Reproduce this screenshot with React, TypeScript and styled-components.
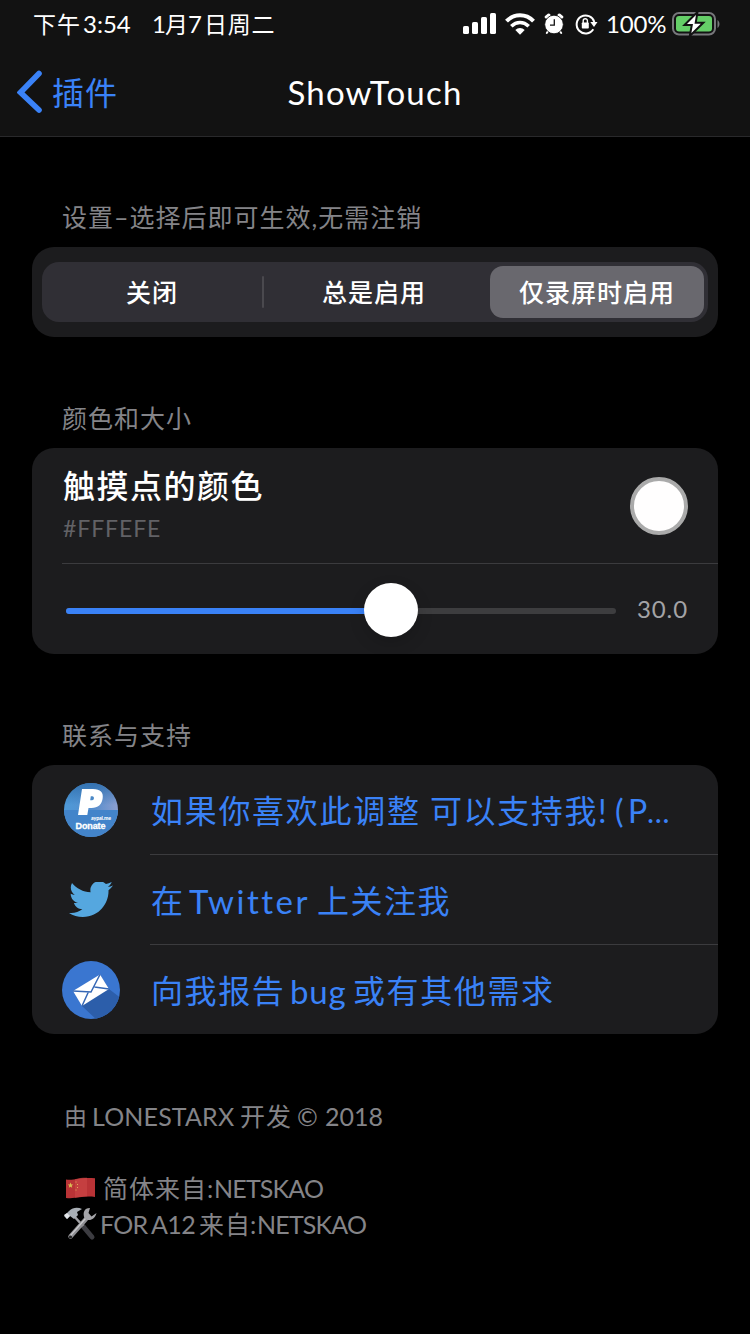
import React from 'react';
import styled, { createGlobalStyle } from 'styled-components';

const GlobalStyle = createGlobalStyle`
  * { box-sizing: border-box; }
  body {
    margin: 0;
    background: #000;
    color: #fff;
    font-family: Lato, 'Noto Sans CJK SC', sans-serif;
  }
`;

const Screen = styled.main`
  width: 750px;
  height: 1334px;
  overflow: hidden;
  background: #000;
`;

const Header = styled.header`
  height: 137px;
  background: #121212;
  border-bottom: 1px solid #29292b;
`;

const StatusBar = styled.div`
  display: flex;
  align-items: center;
  justify-content: space-between;
  height: 48px;
  padding: 0 30px 0 33px;
`;

const Line = styled.div<{ $size: number; $color?: string }>`
  display: flex;
  align-items: center;
  height: 36px;
  line-height: 36px;
  font-size: ${p => p.$size}px;
  color: ${p => p.$color ?? 'inherit'};
  white-space: pre;
`;

const Run = styled.span<{ $w: number; $track?: number; $size?: number }>`
  flex: none;
  width: ${p => p.$w}px;
  letter-spacing: ${p => p.$track ?? 0}px;
  ${p => p.$size && `font-size: ${p.$size}px;`}
`;

const StatusIcons = styled.div`
  display: flex;
  align-items: center;
  height: 48px;
  svg { display: block; flex: none; }
`;

const Percent = styled.span`
  width: 60px;
  margin-left: 8px;
  padding-bottom: 1px;
  font-size: 24px;
  letter-spacing: -0.2px;
`;

const NavBar = styled.nav`
  display: grid;
  grid-template-columns: 1fr auto 1fr;
  align-items: center;
  height: 88px;
`;

const Back = styled.div`
  display: flex;
  align-items: center;
  gap: 9px;
  padding-left: 17px;
  color: #3a82f7;
  font-size: 32px;
  letter-spacing: 1px;
`;

const BackText = styled.span`
  padding-bottom: 3px;
`;

const Title = styled.h1`
  margin: 0;
  font-size: 33px;
  font-weight: 400;
  letter-spacing: 1.2px;
`;

const Label = styled.h2<{ $top: number }>`
  margin: 0;
  padding: ${p => p.$top - 1}px 0 0 62px;
  height: ${p => p.$top + 47}px;
  line-height: 36px;
  font-size: 25px;
  font-weight: 400;
  letter-spacing: 1px;
  color: #848488;
`;

const Card = styled.section`
  width: 686px;
  margin: 0 32px;
  background: #1c1c1e;
  border-radius: 22px;
  overflow: hidden;
`;

const Segments = styled.div`
  display: grid;
  grid-template-columns: 220px 2px 226px 214px;
  align-items: center;
  height: 60px;
  margin: 15px 10px;
  border-radius: 17px;
  background: #302f35;
`;

const Segment = styled.div<{ $selected?: boolean; $end?: number }>`
  display: flex;
  align-items: center;
  justify-content: center;
  height: 52px;
  padding: 0 ${p => p.$end ?? 0}px 2px 0;
  border-radius: 13px;
  font-size: 25px;
  font-weight: 500;
  letter-spacing: 1px;
  background: ${p => (p.$selected ? '#69686e' : 'transparent')};
`;

const Divider = styled.i`
  width: 2px;
  height: 32px;
  background: #4a494e;
  border-radius: 1px;
`;

const ColorRow = styled.div`
  display: flex;
  align-items: center;
  justify-content: space-between;
  height: 116px;
  margin-left: 30px;
  padding-right: 30px;
  border-bottom: 1px solid #3b3b3e;
`;

const ColorText = styled.div`
  display: flex;
  flex-direction: column;
  padding: 2px 0 0 1px;
  gap: 6px;
`;

const ColorName = styled.div`
  height: 36px;
  line-height: 36px;
  font-size: 32px;
  font-weight: 500;
  letter-spacing: 1.5px;
`;

const ColorCode = styled.div`
  height: 36px;
  line-height: 36px;
  font-size: 23px;
  letter-spacing: 0.9px;
  color: #626266;
`;

const Swatch = styled.div`
  width: 58px;
  height: 58px;
  border: 4px solid #aaa;
  border-radius: 50%;
  background: #fffefe;
`;

const SliderRow = styled.div`
  display: flex;
  align-items: center;
  justify-content: space-between;
  height: 90px;
  padding: 0 30px 0 34px;
`;

const Track = styled.div`
  display: flex;
  align-items: center;
  width: 550px;
  height: 6px;
  margin-top: 4px;
  border-radius: 3px;
  background: #3d3d3f;
`;

const Filled = styled.div`
  flex: 0 0 300px;
  height: 6px;
  border-radius: 3px 0 0 3px;
  background: #3a82f7;
`;

const Thumb = styled.div`
  flex: none;
  width: 54px;
  height: 54px;
  margin: -2px 0 0 -2px;
  border-radius: 50%;
  background: #fff;
  box-shadow: 0 6px 16px rgba(0, 0, 0, 0.16);
`;

const SliderValue = styled.span`
  padding-bottom: 2px;
  font-size: 24px;
  letter-spacing: 0.9px;
  color: #a3a3a6;
`;

const LinkRow = styled.div`
  display: flex;
  height: 90px;
  align-items: center;
  &:last-child { height: 89px; }
`;

const IconCell = styled.div`
  display: flex;
  flex: 0 0 118px;
  align-items: center;
  justify-content: center;
  svg { display: block; }
`;

const LinkBody = styled.div<{ $last?: boolean }>`
  display: flex;
  flex: 1;
  align-items: center;
  align-self: stretch;
  padding: 3px 0 0 1px;
  border-bottom: ${p => (p.$last ? 'none' : '1px solid #3b3b3e')};
`;

const Footer = styled.footer`
  padding: 64px 0 0 64px;
  svg { flex: none; display: block; }
`;

const Gap = styled.div`
  height: 36px;
`;

const Signal = () => (
  <svg width="34" height="22" viewBox="0 0 34 22" fill="#fff">
    <rect x="0" y="13" width="6" height="8" rx="1.6" />
    <rect x="9" y="9" width="6" height="12" rx="1.6" />
    <rect x="18" y="4" width="6" height="17" rx="1.6" />
    <rect x="27" y="0" width="6" height="21" rx="1.6" />
  </svg>
);

const Wifi = () => (
  <svg width="30" height="22" viewBox="0 0 30 22" fill="none" stroke="#fff" strokeWidth="4" style={{ marginLeft: 8 }}>
    <path d="M1.5 8.2C9 .4 21 .4 28.5 8.2" />
    <path d="M6.300 13.200C11.500 8.200 18.500 8.200 23.700 13.200" strokeWidth="3.600" />
    <path d="M10.300 17C13 14.300 17 14.300 19.700 17L15 21.800Z" fill="#fff" stroke="none" />
  </svg>
);

const Alarm = () => (
  <svg width="20" height="22" viewBox="0 0 20 22" style={{ marginLeft: 9 }}>
    <g fill="none" stroke="#fff" strokeLinecap="round">
      <path d="M2.400 4 4.800 2.200M17.600 4 15.200 2.200" strokeWidth="3.400" />
      <path d="M4.500 17.500 2.800 20M15.500 17.500l1.700 2.500" strokeWidth="2" />
    </g>
    <circle cx="10" cy="11.500" r="9.300" fill="#fff" stroke="#121212" strokeWidth="0.800" />
    <path d="M10.300 6.300v5.900H6" fill="none" stroke="#121212" strokeWidth="1.300" />
  </svg>
);

const RotationLock = () => (
  <svg width="23" height="22" viewBox="0 0 23 22" style={{ marginLeft: 11 }}>
    <path d="M18.300 16.200A9 9 0 1 1 19.300 9" fill="none" stroke="#fff" strokeWidth="2" />
    <path d="M15.300 9h7.200L19 14Z" fill="#fff" />
    <rect x="6.800" y="9.500" width="7" height="6" rx="0.800" fill="#fff" />
    <path d="M8.200 10V7.800a2.100 2.100 0 0 1 4.200 0V10" fill="none" stroke="#fff" strokeWidth="1.400" />
  </svg>
);

const Battery = () => (
  <svg width="48" height="26" viewBox="0 0 48 26" style={{ marginLeft: 6 }}>
    <rect x="1" y="2" width="42" height="21.500" rx="6" fill="none" stroke="#77777b" strokeWidth="2" />
    <path d="M45.500 9v8c2.600-1.500 2.600-6.500 0-8Z" fill="#77777b" />
    <rect x="4" y="5" width="36" height="15.500" rx="3" fill="#65ce68" />
    <path d="M25.500 1 12.500 14h7.300l-2 11 13.500-13.200h-7.600Z" fill="#fff" stroke="#121212" strokeWidth="2" />
  </svg>
);

const Chevron = () => (
  <svg width="26" height="44" viewBox="0 0 26 44">
    <path d="M22 3.500 3.500 22.500 22 40" fill="none" stroke="#3a82f7" strokeWidth="5.600" strokeLinecap="round" strokeLinejoin="miter" />
  </svg>
);

const PaypalIcon = () => (
  <svg width="54" height="54" viewBox="0 0 54 54">
    <defs>
      <linearGradient id="sky" x1="0" y1="0" x2="1" y2="0">
        <stop offset="0" stopColor="#4e9ad8" />
        <stop offset="0.550" stopColor="#568dcd" />
        <stop offset="1" stopColor="#8d9fd0" />
      </linearGradient>
      <linearGradient id="dusk" x1="0" y1="0" x2="0" y2="1">
        <stop offset="0" stopColor="#2f6fae" stopOpacity="0.900" />
        <stop offset="1" stopColor="#2f6fae" stopOpacity="0" />
      </linearGradient>
      <clipPath id="disc"><circle cx="27" cy="27" r="27" /></clipPath>
    </defs>
    <g clipPath="url(#disc)">
      <rect width="54" height="54" fill="url(#sky)" />
      <rect width="54" height="22" fill="url(#dusk)" />
      <rect y="27" width="54" height="27" fill="#4384ca" />
    </g>
    <path d="M18 6H29C36.500 6 39.500 9.500 38.700 15C38 21.500 34 25 27.500 25H24.500L23.300 32H14Z" fill="#fff" />
    <path d="M26.800 13.300h1.600c2.200 0 2 4-.4 4h-1.800Z" fill="#4a88c6" />
    <text x="27" y="36.500" fontSize="5.200" fontWeight="900" fill="#fff" fontFamily="Lato" textLength="20">aypal.me</text>
    <text x="11.500" y="46" fontSize="9" fontWeight="700" fill="#fff" stroke="#fff" strokeWidth="0.300" fontFamily="Liberation Sans" textLength="30">Donate</text>
  </svg>
);

const TwitterIcon = () => (
  <svg width="44" height="36" viewBox="0 2.700 24 19.600" fill="#55a7df">
    <path d="M23.954 4.569c-.885.389-1.830.654-2.825.775 1.014-.611 1.794-1.574 2.163-2.723-.951.555-2.005.959-3.127 1.184-.896-.959-2.173-1.559-3.591-1.559-2.717 0-4.920 2.203-4.920 4.917 0 .390.045.765.127 1.124C7.691 8.094 4.066 6.130 1.640 3.161c-.427.722-.666 1.561-.666 2.475 0 1.710.870 3.213 2.188 4.096-.807-.026-1.566-.248-2.228-.616v.061c0 2.385 1.693 4.374 3.946 4.827-.413.111-.849.171-1.296.171-.314 0-.615-.030-.916-.086.631 1.953 2.445 3.377 4.604 3.417-1.680 1.319-3.809 2.105-6.102 2.105-.390 0-.779-.023-1.170-.067 2.189 1.394 4.768 2.209 7.557 2.209 9.054 0 13.999-7.496 13.999-13.986 0-.209 0-.420-.015-.630.961-.689 1.800-1.560 2.460-2.548l-.047-.020z" />
  </svg>
);

const MailIcon = () => (
  <svg width="58" height="58" viewBox="0 0 58 58">
    <defs><clipPath id="mailDisc"><circle cx="29" cy="29" r="29" /></clipPath></defs>
    <g clipPath="url(#mailDisc)">
      <rect width="58" height="58" fill="#3a76d0" />
      <path d="M38 13.500 47 28 60 38V60H36L20 45Z" fill="#2c5eaa" />
    </g>
    <path d="M38 13.500 47 28 20 45 11 30Z" fill="#fff" />
    <path d="M11 30 29 31 38 13.500M20 45 26.500 30.800M47 28 32.500 26" fill="none" stroke="#3567b5" strokeWidth="1.500" />
  </svg>
);

const Flag = () => (
  <svg width="30" height="22" viewBox="0 0 30 22" style={{ margin: '0 7px 0 2px' }}>
    <path d="M0 2.500C8 4 13-.2 29 1.200V20C17 18.500 11 22 0 21Z" fill="#b93336" />
    <path d="M9 2.200C14 .9 18 .6 21 .8V19.300c-4 .1-8 .9-12 1.400Z" fill="#cb4545" opacity="0.700" />
    <path d="m4.500 5.500.8 1.900 2 .1-1.600 1.300.5 2-1.700-1.100-1.700 1.100.5-2L1.700 7.500l2-.1Z" fill="#d9bf55" />
    <path d="M9.500 5h1M11 7.500h1M11 10.500h1M9.500 13h1" stroke="#dfad58" strokeWidth="1" />
  </svg>
);

const Tools = () => (
  <svg width="33" height="34" viewBox="0 0 33 34" style={{ marginRight: 3 }}>
    <path d="M18 18 28 30" stroke="#3c3c41" strokeWidth="5" strokeLinecap="round" />
    <path d="M10 9 19 19" stroke="#a0a0a5" strokeWidth="2.600" />
    <path d="M0 9 5 4C9 0 14 0 18 2L13 5 14 8 10 12 6 9 3 12Z" fill="#a9afb6" />
    <path d="m0 8 3 4 3-3-3-3Z" fill="#e4e6ea" />
    <path d="M6.500 29.500 22 12" stroke="#8f8f93" strokeWidth="4.500" strokeLinecap="round" />
    <path d="M6.500 28.500 22 11" stroke="#c9c9cc" strokeWidth="1.300" />
    <path d="M26 1C20 1 18.500 6 20.500 11C24 15 31 13 32.500 6L27.500 9.500 24.500 6Z" fill="#a4a4a8" />
    <circle cx="6.500" cy="30" r="1.600" fill="#222" />
  </svg>
);

export default function App() {
  return (
    <Screen>
      <GlobalStyle />
      <Header>
        <StatusBar>
          <Line $size={23}>
            <Run $w={50} $track={1}>下午</Run>
            <Run $w={69} $size={24}>3:54</Run>
            <Run $w={13} $size={24}>1</Run>
            <Run $w={23}>月</Run>
            <Run $w={16} $size={24}>7</Run>
            <Run $w={73} $track={0.7}>日周二</Run>
          </Line>
          <StatusIcons>
            <Signal />
            <Wifi />
            <Alarm />
            <RotationLock />
            <Percent>100%</Percent>
            <Battery />
          </StatusIcons>
        </StatusBar>
        <NavBar>
          <Back><Chevron /><BackText>插件</BackText></Back>
          <Title>ShowTouch</Title>
        </NavBar>
      </Header>

      <Label $top={63}>设置–选择后即可生效,无需注销</Label>
      <Card>
        <Segments>
          <Segment>关闭</Segment>
          <Divider />
          <Segment $end={6}>总是启用</Segment>
          <Segment $selected>仅录屏时启用</Segment>
        </Segments>
      </Card>

      <Label $top={64}>颜色和大小</Label>
      <Card>
        <ColorRow>
          <ColorText>
            <ColorName>触摸点的颜色</ColorName>
            <ColorCode>#FFFEFE</ColorCode>
          </ColorText>
          <Swatch />
        </ColorRow>
        <SliderRow>
          <Track><Filled /><Thumb /></Track>
          <SliderValue>30.0</SliderValue>
        </SliderRow>
      </Card>

      <Label $top={64}>联系与支持</Label>
      <Card>
        <LinkRow>
          <IconCell><PaypalIcon /></IconCell>
          <LinkBody>
            <Line $size={32} $color="#3a82f7">
              <Run $w={279} $track={1.7}>如果你喜欢此调整 </Run>
              <Run $w={168} $track={1.6}>可以支持我</Run>
              <Run $w={17}>!</Run>
              <Run $w={13}>(</Run>
              <Run $w={19}>P</Run>
              <Run $w={24} $size={30}>…</Run>
            </Line>
          </LinkBody>
        </LinkRow>
        <LinkRow>
          <IconCell><TwitterIcon /></IconCell>
          <LinkBody>
            <Line $size={32} $color="#3a82f7">
              <Run $w={38}>在 </Run>
              <Run $w={128} $track={2.5} $size={33}>Twitter</Run>
              <Run $w={140} $track={1.5}>上关注我</Run>
            </Line>
          </LinkBody>
        </LinkRow>
        <LinkRow>
          <IconCell><MailIcon /></IconCell>
          <LinkBody $last>
            <Line $size={32} $color="#3a82f7">
              <Run $w={139} $track={1.6}>向我报告</Run>
              <Run $w={63} $track={0.8} $size={33}>bug</Run>
              <Run $w={210} $track={1.6}>或有其他需求</Run>
            </Line>
          </LinkBody>
        </LinkRow>
      </Card>

      <Footer>
        <Line $size={25} $color="#848488">
          <Run $w={28} $size={23}>由</Run>
          <Run $w={148} $track={0.15}>LONESTARX</Run>
          <Run $w={57} $track={1}>开发</Run>
          <Run $w={28}>©</Run>
          <Run $w={60}>2018</Run>
        </Line>
        <Gap />
        <Line $size={25} $color="#848488">
          <Flag />
          <Run $w={104} $track={1}>简体来自</Run>
          <Run $w={7}>:</Run>
          <Run $w={110} $track={-0.8}>NETSKAO</Run>
        </Line>
        <Line $size={25} $color="#848488">
          <Tools />
          <Run $w={51} $track={-0.8}>FOR</Run>
          <Run $w={48} $track={-0.6}>A12</Run>
          <Run $w={51} $track={1}>来自</Run>
          <Run $w={7}>:</Run>
          <Run $w={110} $track={-0.8}>NETSKAO</Run>
        </Line>
      </Footer>
    </Screen>
  );
}
